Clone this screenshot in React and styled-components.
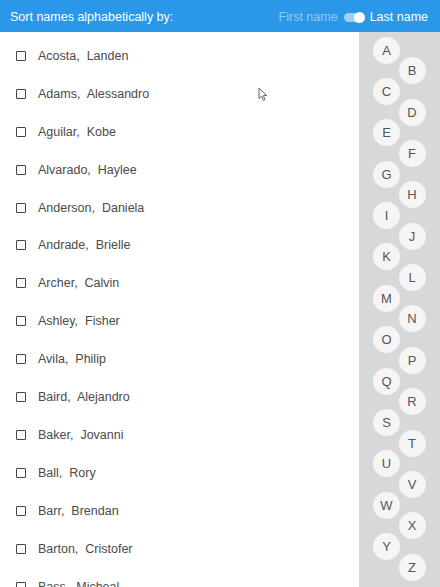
import React from "react";
import styled, { createGlobalStyle } from "styled-components";

const Global = createGlobalStyle`
  html, body { margin: 0; padding: 0; background: #fff; }
  body { font-family: "Liberation Sans", Arial, sans-serif; overflow: hidden; }
`;

const Page = styled.div`
  width: 440px;
  height: 587px;
  display: flex;
  flex-direction: column;
  overflow: hidden;
  position: relative;
`;

const Header = styled.div`
  height: 32px;
  box-sizing: border-box;
  flex: none;
  background: #2a97e9;
  display: flex;
  align-items: center;
  padding: 2px 12px 0 10px;
  color: #fff;
  font-size: 12.5px;
`;

const Title = styled.div`
  flex: 1;
`;

const ToggleWrap = styled.div`
  display: flex;
  align-items: center;
  gap: 6px;
`;

const Option = styled.span`
  color: ${(p) => (p.$active ? "#fff" : "rgba(255,255,255,0.5)")};
`;

const Track = styled.div`
  width: 20px;
  height: 9px;
  border-radius: 5px;
  background: rgba(255, 255, 255, 0.55);
  position: relative;
`;

const Knob = styled.div`
  position: absolute;
  right: -1px;
  top: 50%;
  width: 11px;
  height: 11px;
  margin-top: -5.5px;
  border-radius: 50%;
  background: #fff;
`;

const Body = styled.div`
  flex: 1;
  display: flex;
  min-height: 0;
`;

const List = styled.div`
  flex: 1;
  padding-top: 5px;
  display: flex;
  flex-direction: column;
`;

const Row = styled.div`
  height: 37.92px;
  flex: none;
  display: flex;
  align-items: center;
  padding-left: 16px;
  font-size: 12.5px;
  color: #4a4a4a;
`;

const Box = styled.span`
  width: 10px;
  height: 10px;
  box-sizing: border-box;
  border: 1.5px solid #444;
  border-radius: 1px;
  margin-right: 12px;
  flex: none;
`;

const Side = styled.div`
  width: 81px;
  flex: none;
  background: #d8d8d8;
  padding-top: 4.5px;
  display: flex;
  flex-direction: column;
`;

const Letter = styled.div`
  width: 27px;
  height: 27px;
  flex: none;
  border-radius: 50%;
  background: #f5f5f5;
  color: #555;
  font-size: 13px;
  display: flex;
  align-items: center;
  justify-content: center;
  margin-left: ${(p) => (p.$odd ? "39.5px" : "14px")};
  margin-top: ${(p) => (p.$first ? "0" : "-6.32px")};
`;

const Cursor = styled.svg`
  position: absolute;
  left: 258px;
  top: 87px;
`;

const names = [
  ["Acosta", "Landen"],
  ["Adams", "Alessandro"],
  ["Aguilar", "Kobe"],
  ["Alvarado", "Haylee"],
  ["Anderson", "Daniela"],
  ["Andrade", "Brielle"],
  ["Archer", "Calvin"],
  ["Ashley", "Fisher"],
  ["Avila", "Philip"],
  ["Baird", "Alejandro"],
  ["Baker", "Jovanni"],
  ["Ball", "Rory"],
  ["Barr", "Brendan"],
  ["Barton", "Cristofer"],
  ["Bass", "Micheal"],
];

const letters = "ABCDEFGHIJKLMNOPQRSTUVWXYZ".split("");

export default function App() {
  return (
    <Page>
      <Global />
      <Header>
        <Title>Sort names alphabetically by:</Title>
        <ToggleWrap>
          <Option>First name</Option>
          <Track>
            <Knob />
          </Track>
          <Option $active>Last name</Option>
        </ToggleWrap>
      </Header>
      <Body>
        <List>
          {names.map(([l, f]) => (
            <Row key={l}>
              <Box />
              <span>
                {l},&nbsp; {f}
              </span>
            </Row>
          ))}
        </List>
        <Side>
          {letters.map((c, i) => (
            <Letter key={c} $odd={i % 2 === 1} $first={i === 0}>
              {c}
            </Letter>
          ))}
        </Side>
      </Body>
      <Cursor width="10" height="15" viewBox="0 0 10 15">
        <path d="M1 1 L1 11.5 L3.6 9.2 L5.4 13.4 L7 12.7 L5.3 8.6 L8.6 8.4 Z" fill="#fff" stroke="#555" strokeWidth="0.9" strokeLinejoin="round" />
      </Cursor>
    </Page>
  );
}
